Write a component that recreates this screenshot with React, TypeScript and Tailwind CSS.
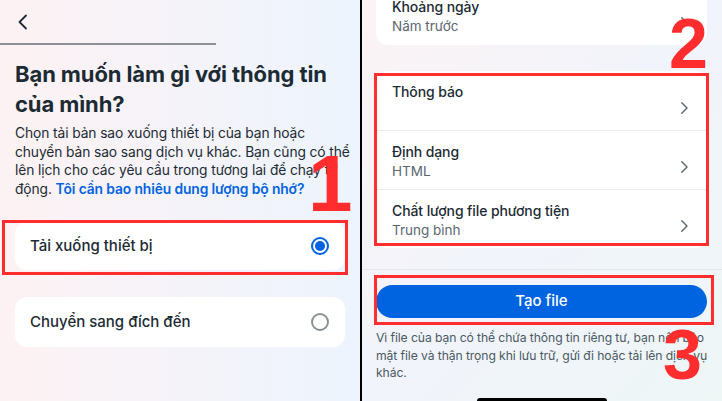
import React from "react";

const font = { fontFamily: "Inter, Roboto, 'Noto Sans', sans-serif" };

function Chevron() {
  return (
    <svg width="9" height="14" viewBox="0 0 9 14" fill="none" className="shrink-0">
      <path d="M1.8 1.8 L7 7 L1.8 12.2" stroke="#5a646d" strokeWidth="1.4" strokeLinecap="round" strokeLinejoin="round" />
    </svg>
  );
}

function Row({ title, sub, border }: { title: string; sub?: string; border?: boolean }) {
  return (
    <div className={`flex items-center h-[59px] pl-[16px] pr-[18px] ${border ? "border-t border-[#e9ecef]" : ""}`}>
      <div className="flex-1 flex flex-col self-start pt-[11px]">
        <div className="text-[14px] leading-[20px] font-medium text-[#1c2b33] tracking-[-0.1px]">{title}</div>
        {sub ? <div className="text-[13.5px] leading-[18px] text-[#5b6770]">{sub}</div> : null}
      </div>
      <div className="pt-[14px]">
        <Chevron />
      </div>
    </div>
  );
}

function BigNum({ n, className }: { n: string; className: string }) {
  return (
    <div
      className={`absolute text-[#ff2d2d] font-bold leading-none ${className}`}
      style={{ fontFamily: "'Liberation Sans', Arial, sans-serif" }}
    >
      {n}
    </div>
  );
}

export default function App() {
  return (
    <div className="w-[722px] h-[401px] flex overflow-hidden bg-white" style={font}>
      {/* Left panel */}
      <div className="relative w-[360px] h-full bg-gradient-to-r from-[#fdf2f3] via-[#f5f3fa] to-[#edf4fd] flex flex-col">
        <div className="h-[43px] flex items-center pl-[17px]">
          <svg width="12" height="16" viewBox="0 0 12 16" fill="none">
            <path d="M9 1.5 L2.5 8 L9 14.5" stroke="#1c2b33" strokeWidth="1.8" strokeLinecap="round" strokeLinejoin="round" />
          </svg>
        </div>
        <div className="h-[2px] w-[216px] bg-[#8d9094]" />
        <div className="px-[15px]">
          <h1 className="mt-[14px] text-[22px] leading-[30px] font-bold text-[#1c2b33] tracking-[-0.1px]">
            Bạn muốn làm gì với thông tin của mình?
          </h1>
          <p className="mt-[5px] mr-[-8px] text-[13.8px] leading-[18.5px] text-[#1c2b33] tracking-[-0.1px]">
            Chọn tải bản sao xuống thiết bị của bạn hoặc chuyển bản sao sang dịch vụ khác. Bạn cũng có thể lên lịch cho các yêu cầu trong tương lai để chạy tự động.{" "}
            <span className="font-semibold text-[#0064e0]">Tôi cần bao nhiêu dung lượng bộ nhớ?</span>
          </p>
          <div className="mt-[24px] h-[48px] rounded-[12px] bg-white flex items-center pl-[15px] pr-[16px]">
            <span className="flex-1 text-[15px] font-medium text-[#1c2b33]">Tải xuống thiết bị</span>
            <span className="w-[18px] h-[18px] rounded-full border-[2px] border-[#0064e0] flex items-center justify-center">
              <span className="w-[10px] h-[10px] rounded-full bg-[#0064e0]" />
            </span>
          </div>
          <div className="mt-[27px] h-[50px] rounded-[12px] bg-white flex items-center pl-[15px] pr-[16px]">
            <span className="flex-1 text-[15px] font-medium text-[#1c2b33]">Chuyển sang đích đến</span>
            <span className="w-[18px] h-[18px] rounded-full border-[2px] border-[#8a9097]" />
          </div>
        </div>
        {/* annotations */}
        <div className="absolute left-[2px] top-[220px] w-[346px] h-[55px] border-[3px] border-[#ff2d2d]" />
        <BigNum n="1" className="left-[308px] top-[144px] text-[80px]" />
      </div>

      {/* Divider */}
      <div className="w-[2px] h-full bg-black" />

      {/* Right panel */}
      <div className="relative flex-1 h-full bg-gradient-to-br from-[#fcf3f5] via-[#f1f4fb] to-[#eef6f6] flex flex-col">
        <div className="mx-[15px] mt-[-14px] ml-[14px] bg-white rounded-[12px]">
          <Row title="Khoảng ngày" sub="Năm trước" />
        </div>
        <div className="mx-[15px] ml-[14px] mt-[26px] bg-white rounded-[12px] overflow-hidden">
          <Row title="Thông báo" />
          <Row title="Định dạng" sub="HTML" border />
          <Row title="Chất lượng file phương tiện" sub="Trung bình" border />
        </div>
        <div className="mt-[21px] h-px bg-[#e3e7ea]" />
        <div className="ml-[14px] mr-[15px] mt-[15px] h-[33px] rounded-full bg-[#0064e0] flex items-center justify-center text-white text-[15px] font-medium">
          Tạo file
        </div>
        <p className="ml-[14px] mr-[6px] mt-[11px] text-[12.2px] leading-[17.5px] text-[#4b5963] tracking-[-0.1px]">
          Vì file của bạn có thể chứa thông tin riêng tư, bạn nên bảo mật file và thận trọng khi lưu trữ, gửi đi hoặc tải lên dịch vụ khác.
        </p>
        <div className="absolute left-[115px] bottom-[-3px] w-[130px] h-[6px] rounded-full bg-black" />
        {/* annotations */}
        <div className="absolute left-[12px] top-[73px] w-[335px] h-[173px] border-[3px] border-[#ff2d2d]" />
        <div className="absolute left-[12px] top-[275px] w-[340px] h-[50px] border-[3px] border-[#ff2d2d]" />
        <BigNum n="2" className="left-[307px] top-[9px] text-[70px]" />
        <BigNum n="3" className="left-[301px] top-[320px] text-[70px]" />
      </div>
    </div>
  );
}
